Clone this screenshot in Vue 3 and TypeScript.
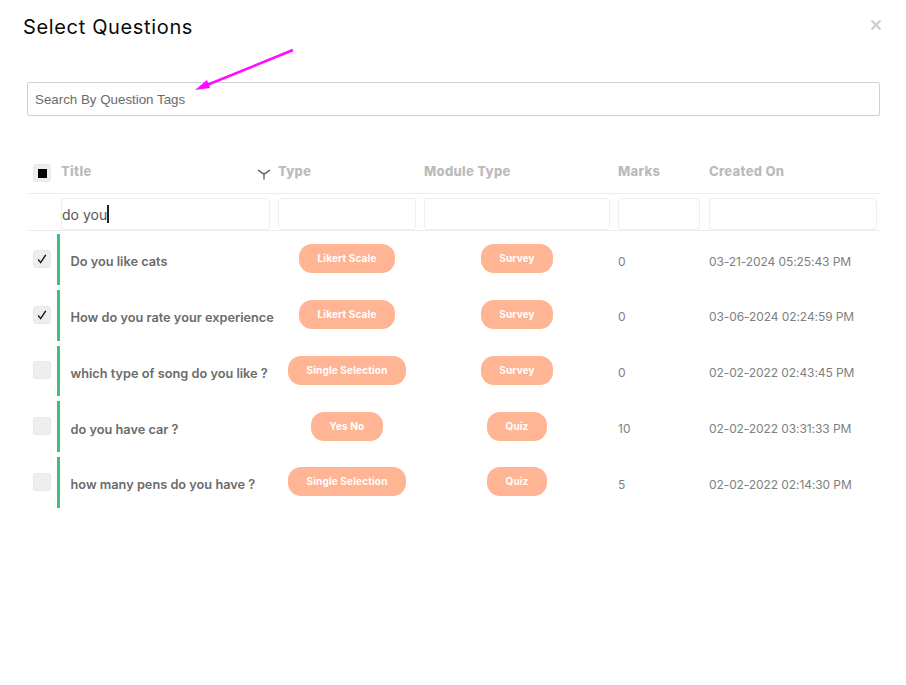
<script setup lang="ts">
interface Question {
  title: string
  type: string
  module: string
  marks: number
  created: string
  checked: boolean
}

const questions: Question[] = [
  { title: 'Do you like cats', type: 'Likert Scale', module: 'Survey', marks: 0, created: '03-21-2024 05:25:43 PM', checked: true },
  { title: 'How do you rate your experience', type: 'Likert Scale', module: 'Survey', marks: 0, created: '03-06-2024 02:24:59 PM', checked: true },
  { title: 'which type of song do you like ?', type: 'Single Selection', module: 'Survey', marks: 0, created: '02-02-2022 02:43:45 PM', checked: false },
  { title: 'do you have car ?', type: 'Yes No', module: 'Quiz', marks: 10, created: '02-02-2022 03:31:33 PM', checked: false },
  { title: 'how many pens do you have ?', type: 'Single Selection', module: 'Quiz', marks: 5, created: '02-02-2022 02:14:30 PM', checked: false },
]
</script>

<template>
  <div class="modal">
    <header class="head">
      <h1 class="title">Select Questions</h1>
      <svg class="close" width="12" height="12" viewBox="0 0 12 12" aria-label="Close">
        <path d="M1.5 1.5 L10.5 10.5 M10.5 1.5 L1.5 10.5" stroke="#cfcfcf" stroke-width="2.4" fill="none" />
      </svg>
    </header>

    <svg class="arrow" width="110" height="50" viewBox="0 0 110 50">
      <path d="M98 2 L12 37" stroke="#ff0cff" stroke-width="2.6" fill="none" />
      <path d="M0 42 L12 32 L15 40 Z" fill="#ff0cff" />
    </svg>

    <div class="content">
      <input class="search" type="text" placeholder="Search By Question Tags" />

      <div class="grid head-row">
        <div class="cell-check head-check">
          <span class="box"><span class="square"></span></span>
        </div>
        <div class="th th-title">
          <span>Title</span>
          <svg width="14" height="11" viewBox="0 0 14 11">
            <path d="M1 1 L7 5.5 L13 1 L7 3 Z" fill="#d5d9de" />
            <path d="M1 1 L7 5.5 L13 1 M7 5.5 V10.5" stroke="#4a5360" stroke-width="1.2" fill="none" />
          </svg>
        </div>
        <div class="th">Type</div>
        <div class="th">Module Type</div>
        <div class="th">Marks</div>
        <div class="th">Created On</div>
      </div>

      <div class="grid filter-row">
        <div></div>
        <div class="filter filter-active">do you<span class="caret"></span></div>
        <div class="filter"></div>
        <div class="filter"></div>
        <div class="filter filter-marks"></div>
        <div class="filter filter-date"></div>
      </div>

      <div class="rows">
        <div v-for="q in questions" :key="q.title" class="grid row">
          <div class="cell-check">
            <span class="box">
              <svg v-if="q.checked" width="12" height="12" viewBox="0 0 12 12">
                <path d="M2.2 6.4 L4.6 9.6 L9.8 1.8" stroke="#111" stroke-width="1.4" fill="none" />
              </svg>
            </span>
          </div>
          <div class="q-title">{{ q.title }}</div>
          <div class="pill-cell"><span class="pill">{{ q.type }}</span></div>
          <div class="pill-cell"><span class="pill">{{ q.module }}</span></div>
          <div class="plain marks">{{ q.marks }}</div>
          <div class="plain date">{{ q.created }}</div>
        </div>
      </div>
    </div>
  </div>
</template>

<style scoped>
.modal {
  position: relative;
  width: 906px;
  height: 685px;
  background: #fff;
  overflow: hidden;
  font-family: Inter, "Noto Sans", sans-serif;
}
.head {
  display: flex;
  justify-content: space-between;
  align-items: flex-start;
  height: 82px;
  box-sizing: border-box;
  padding: 13px 24px 0 23px;
}
.title {
  margin: 0;
  font-size: 20px;
  line-height: 28px;
  font-weight: 400;
  color: #0b0b0b;
  letter-spacing: 0.65px;
}
.close {
  margin-top: 6px;
}
.arrow {
  position: absolute;
  left: 195px;
  top: 48px;
}
.content {
  padding: 0 26px 0 27px;
}
.search {
  display: block;
  width: 100%;
  height: 34px;
  box-sizing: border-box;
  padding: 0 7px;
  border: 1px solid #c8d3dc;
  border-radius: 2px;
  outline: none;
  font-family: "Liberation Sans", Arial, sans-serif;
  font-size: 13.333px;
  color: #6b6b6b;
}
.search::placeholder {
  color: #6b6b6b;
  opacity: 1;
}
.grid {
  display: grid;
  grid-template-columns: 30px 221px 146px 194px 91px 171px;
}
.head-row {
  margin-top: 39px;
  height: 39px;
  align-items: center;
  border-bottom: 1px solid #eee;
  box-sizing: border-box;
}
.cell-check {
  padding-left: 6px;
  display: flex;
}
.head-check {
  margin-top: -2px;
}
.box {
  width: 18px;
  height: 18px;
  border-radius: 3px;
  background: #eee;
  border: 1px solid #e8e8e8;
  box-sizing: border-box;
  display: flex;
  align-items: center;
  justify-content: center;
}
.square {
  width: 9px;
  height: 9px;
  background: #000;
}
.th {
  font-size: 13px;
  font-weight: 800;
  color: #bbb;
  line-height: 20px;
  margin-top: -6px;
  letter-spacing: 0.3px;
}
.th-title {
  display: flex;
  justify-content: space-between;
  align-items: center;
  padding-left: 4px;
  padding-right: 7px;
}
.th-title svg {
  margin-top: 6px;
}
.filter-row {
  height: 37px;
  box-sizing: border-box;
  padding-top: 4px;
  border-bottom: 1px solid #ececec;
}
.filter {
  height: 32px;
  box-sizing: border-box;
  margin-right: 8px;
  border: 1px solid #eee;
  border-radius: 4px;
  background: #fff;
}
.filter-marks {
  margin-right: 9px;
}
.filter-date {
  margin-right: 3px;
}
.filter-active {
  margin-left: 4px;
  display: flex;
  align-items: center;
  font-size: 14px;
  color: #555;
}
.caret {
  display: inline-block;
  width: 2px;
  height: 18px;
  background: #222;
}
.rows {
  margin-top: 3px;
  display: flex;
  flex-direction: column;
  gap: 5px;
}
.row {
  height: 50.75px;
}
.row .cell-check {
  padding-top: 15.9px;
}
.q-title {
  border-left: 3px solid #3fc07a;
  padding: 18.4px 0 0 10.5px;
  font-size: 12.75px;
  line-height: 20px;
  font-weight: 600;
  color: #6b6b6b;
  white-space: nowrap;
}
.pill-cell {
  padding: 10.3px 8px 0 0;
  text-align: center;
}
.pill {
  display: inline-block;
  height: 29px;
  line-height: 29px;
  padding: 0 18.5px;
  border-radius: 13px;
  background: #ffb494;
  color: #fff;
  font-size: 10px;
  font-weight: 700;
  letter-spacing: 0.15px;
  white-space: nowrap;
}
.plain {
  padding-top: 17.7px;
  font-size: 12px;
  line-height: 20px;
  color: #808080;
  white-space: nowrap;
}
.date {
  letter-spacing: -0.09px;
}
</style>

<style>
html, body {
  background: #fff;
}
</style>
